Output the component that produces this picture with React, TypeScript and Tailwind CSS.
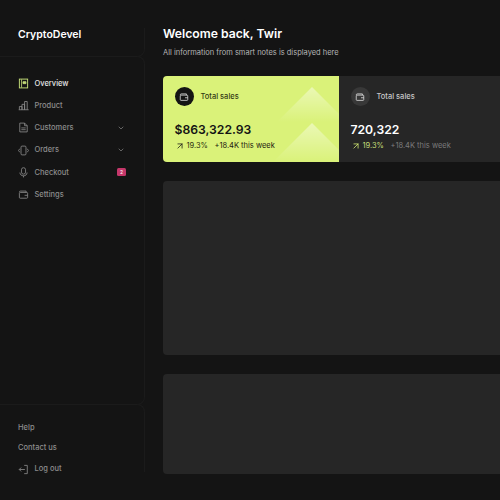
import { ChevronDown, ArrowUpRight } from "lucide-react";
import type { ReactNode } from "react";

const FONT = "font-['Inter','Liberation_Sans',sans-serif]";

function Svg({ children, className = "" }: Readonly<{ children: ReactNode; className?: string }>) {
  return (
    <svg viewBox="0 0 16 16" fill="none" stroke="currentColor" strokeWidth="1.2" className={`w-[11px] h-[11px] shrink-0 ${className}`} aria-hidden>
      {children}
    </svg>
  );
}

const OverviewIcon = () => (
  <Svg className="text-[#c3dc78]">
    <rect x="2" y="1.6" width="12" height="12.8" strokeWidth="1.4" />
    <path d="M5.2 2v12" />
    <path d="M7.3 5.4h4.2v2.8H7.3z" fill="currentColor" />
  </Svg>
);
const ProductIcon = () => (
  <Svg>
    <path d="M1 14.2h14.5M2 14.2V9.5h3.8v4.7M5.8 14.2V6.3h3.8v7.9M9.6 14.2V2.2h3.8v12" />
  </Svg>
);
const CustomersIcon = () => (
  <Svg>
    <path d="M2.6 1.6h7l3.8 3.8v9H2.6z" />
    <path d="M9.6 1.6v3.8h3.8M4.8 8.6h6.4M4.8 11.2h6.4" />
  </Svg>
);
const OrdersIcon = () => (
  <Svg>
    <rect x="4.4" y="1.6" width="7.2" height="12.8" rx="1.5" />
    <path d="M2.6 5.4.8 8l1.8 2.6M13.4 5.4 15.2 8l-1.8 2.6" />
  </Svg>
);
const CheckoutIcon = () => (
  <Svg>
    <rect x="5" y="1" width="6" height="9.4" rx="3" />
    <path d="M2.8 8c0 3.1 2.3 4.8 5.2 4.8s5.2-1.7 5.2-4.8M8 12.8V15.2" />
  </Svg>
);
const WalletIcon = ({ className = "" }: Readonly<{ className?: string }>) => (
  <Svg className={className}>
    <path d="M2 4.6c0-1 .6-1.6 1.6-1.6h8.2v2.2" />
    <rect x="2" y="5" width="12" height="8.4" rx="1.2" />
    <path d="M9.6 9.2H14" />
  </Svg>
);
const LogoutIcon = () => (
  <Svg>
    <path d="M9 2h4.5v12H9M10 8H2M4.6 5.2 1.8 8l2.8 2.8" />
  </Svg>
);

const NAV: { label: string; icon: ReactNode; active?: boolean; chevron?: boolean; badge?: string }[] = [
  { label: "Overview", icon: <OverviewIcon />, active: true },
  { label: "Product", icon: <ProductIcon /> },
  { label: "Customers", icon: <CustomersIcon />, chevron: true },
  { label: "Orders", icon: <OrdersIcon />, chevron: true },
  { label: "Checkout", icon: <CheckoutIcon />, badge: "2" },
  { label: "Settings", icon: <WalletIcon /> },
];

function Sidebar() {
  return (
    <aside className="w-[145px] shrink-0 my-[28px] h-[444px] flex flex-col">
      <div className="h-[29px] shrink-0 pl-[18px] border-r border-b border-[#1b1b1b] rounded-br-[8px]">
        <span className="block text-[10.5px] leading-[13px] font-semibold text-white">CryptoDevel</span>
      </div>
      <nav className="flex-1 -mt-px px-[18px] pt-[15px] flex flex-col border-y border-r border-[#1b1b1b] rounded-r-[8px]">
        {NAV.map((item) => (
          <div key={item.label} className={`h-[22.3px] flex items-center gap-[5.5px] text-[7.5px] ${item.active ? "text-[#e4e4e4]" : "text-[#8c8c8c]"}`}>
            {item.icon}
            <span className="font-medium flex-1">{item.label}</span>
            {item.chevron && <ChevronDown className="w-[8px] h-[8px] mr-[1px] text-[#8c8c8c]" strokeWidth={2} />}
            {item.badge && (
              <span className="w-[9px] h-[8px] rounded-[1.5px] bg-[#c5376a] text-[5px] leading-[8px] text-center text-white">{item.badge}</span>
            )}
          </div>
        ))}
      </nav>
      <div className="h-[68px] shrink-0 -mt-px border-t border-r border-[#1b1b1b] rounded-tr-[8px] pl-[18px] pt-[13px] flex flex-col text-[7.5px] font-medium text-[#8c8c8c]">
        <div className="h-[20px] shrink-0 flex items-center">Help</div>
        <div className="h-[20px] shrink-0 flex items-center">Contact us</div>
        <div className="h-[22px] shrink-0 flex items-center gap-[5.5px]">
          <LogoutIcon />
          <span>Log out</span>
        </div>
      </div>
    </aside>
  );
}

function Triangles() {
  return (
    <svg viewBox="0 0 70 86" className="absolute right-0 top-0 w-[70px] h-[86px]" aria-hidden>
      <defs>
        <linearGradient id="tri" x1="0" y1="0" x2="0" y2="1">
          <stop offset="0" stopColor="#ffffff" stopOpacity="0.45" />
          <stop offset="1" stopColor="#ffffff" stopOpacity="0" />
        </linearGradient>
      </defs>
      <path d="M43 11 78 46H8Z" fill="url(#tri)" />
      <path d="M43 47 82 86H4Z" fill="url(#tri)" />
    </svg>
  );
}

function StatCard({ value, light = false }: Readonly<{ value: string; light?: boolean }>) {
  return (
    <div className={`relative h-[86px] overflow-hidden pl-[11.5px] pt-[11px] ${
      light ? "w-[176px] shrink-0 rounded-l-[4px] bg-[#daf279] text-[#141414]" : "flex-1 bg-[#262626] text-white"
    }`}>
      {light && <Triangles />}
      <div className="relative flex items-center gap-[7px]">
        <span className={`w-[19px] h-[19px] rounded-full flex items-center justify-center ${light ? "bg-[#141414] text-[#e8e8e8]" : "bg-[#383838] text-[#e8e8e8]"}`}>
          <WalletIcon className="!w-[10px] !h-[10px]" />
        </span>
        <span className={`pt-[1px] text-[7.5px] font-medium ${light ? "text-[#333a14]" : "text-[#c8c8c8]"}`}>Total sales</span>
      </div>
      <div className="relative mt-[16px] text-[12.2px] leading-[16px] font-semibold">{value}</div>
      <div className="relative mt-[2px] flex items-center text-[7.5px] leading-[12px]">
        <ArrowUpRight className={`w-[10px] h-[10px] mr-[2px] ${light ? "" : "text-[#dcf577]"}`} strokeWidth={1.8} />
        <span className={`mr-[6.5px] ${light ? "text-[#2b3010]" : "text-[#c3dc78]"}`}>19.3%</span>
        <span className={light ? "text-[#1d2010]" : "text-[#7c7c7c]"}>+18.4K this week</span>
      </div>
    </div>
  );
}

export default function App() {
  return (
    <div className={`w-[500px] h-[500px] overflow-hidden bg-[#141414] flex ${FONT}`}>
      <Sidebar />
      <main className="flex-1 min-w-0 pl-[18px] pt-[26px] flex flex-col">
        <h1 className="text-[12.2px] leading-[15px] font-semibold text-white">Welcome back, Twir</h1>
        <p className="mt-[6px] text-[7.5px] leading-[12px] text-[#b4b4b4]">All information from smart notes is displayed here</p>
        <div className="mt-[17px] flex">
          <StatCard value="$863,322.93" light />
          <StatCard value="720,322" />
        </div>
        <div className="mt-[19px] h-[174px] rounded-l-[4px] bg-[#262626]" />
        <div className="mt-[19px] h-[100px] rounded-l-[4px] bg-[#262626]" />
      </main>
    </div>
  );
}
